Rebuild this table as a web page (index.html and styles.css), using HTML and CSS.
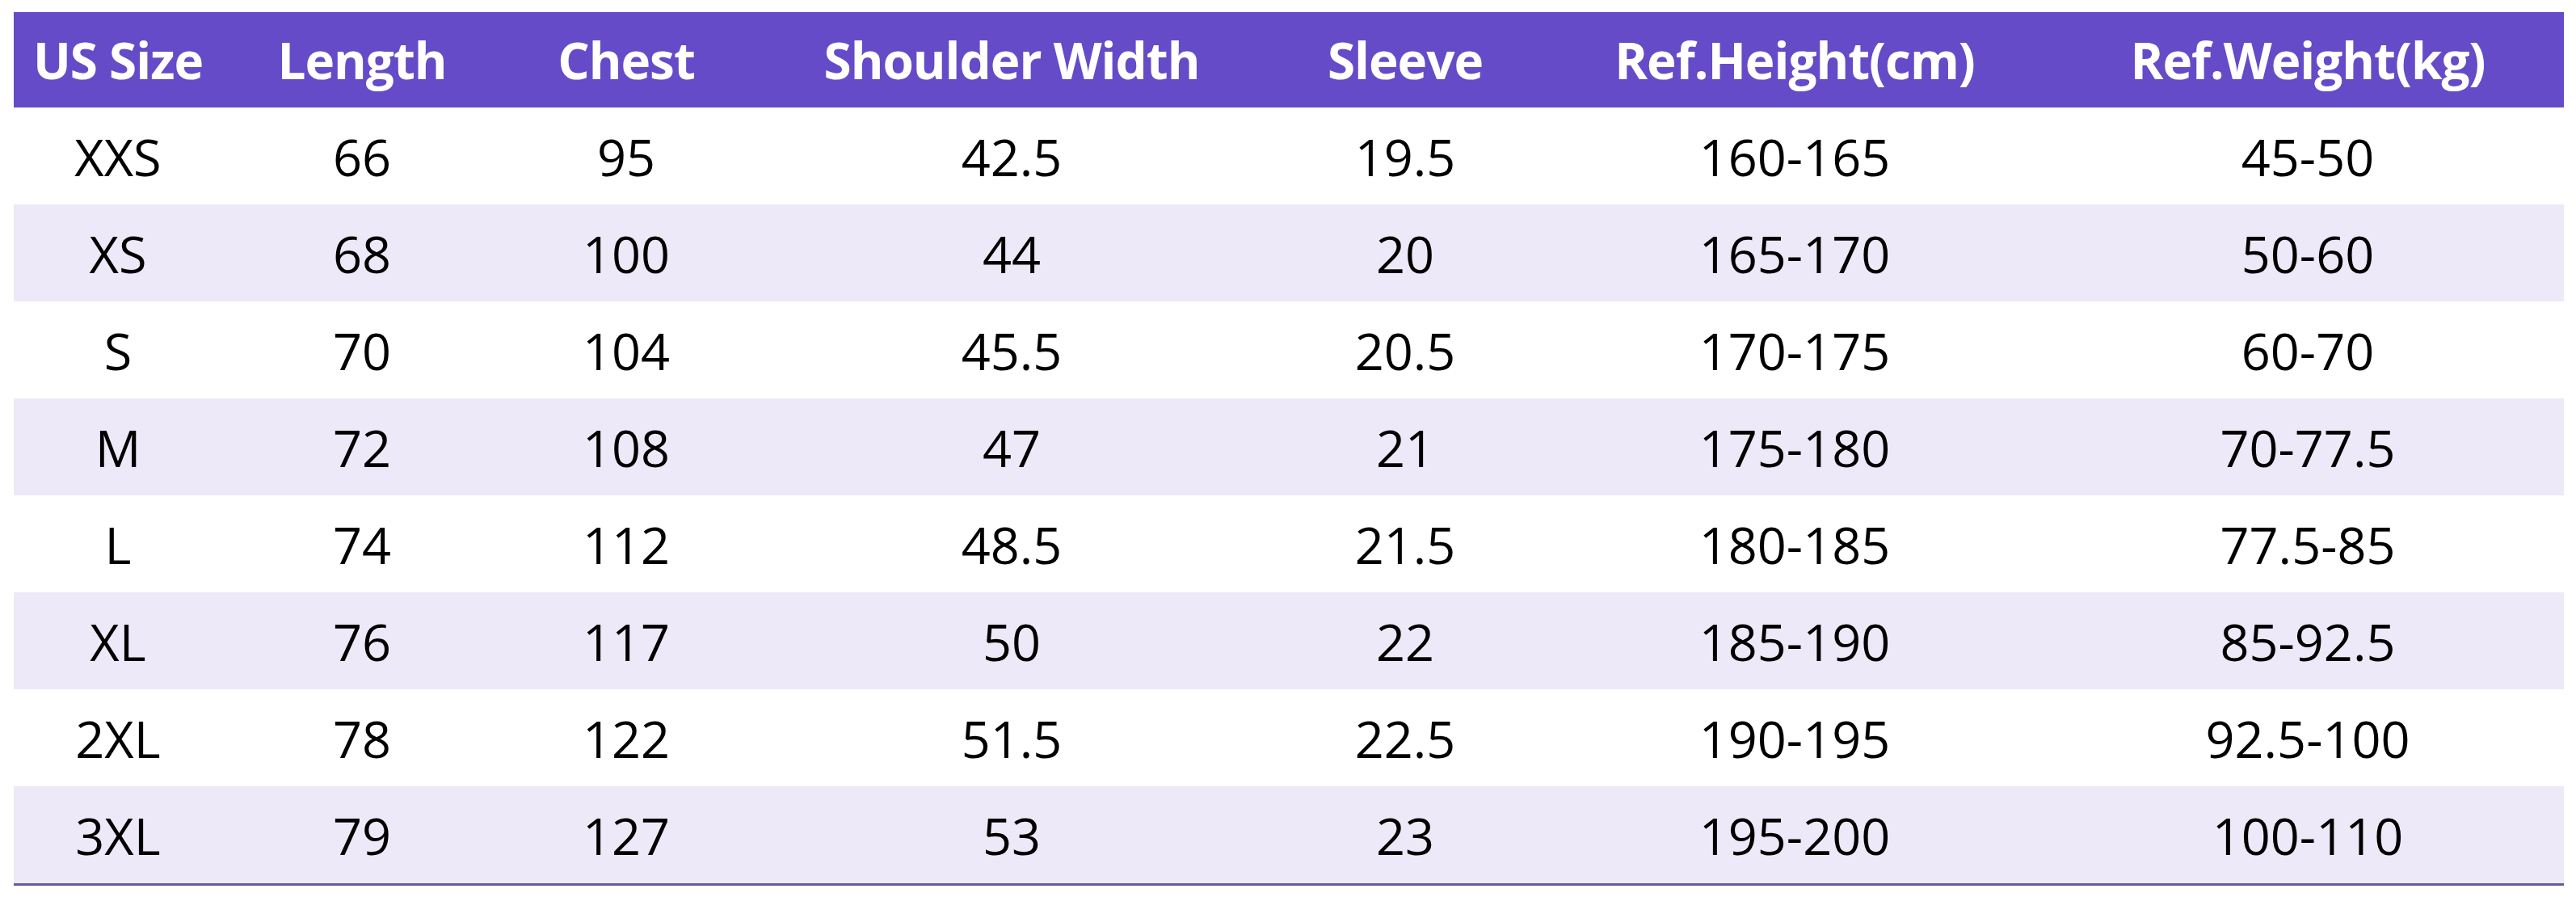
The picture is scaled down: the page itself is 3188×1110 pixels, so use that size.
FILE: index.html
```html
<!DOCTYPE html>
<html lang="en">
<head>
<meta charset="utf-8">
<title>Size Chart</title>
<link rel="stylesheet" href="styles.css">
</head>
<body>
<table class="size-table">
  <colgroup>
    <col class="c1"><col class="c2"><col class="c3"><col class="c4"><col class="c5"><col class="c6"><col class="c7">
  </colgroup>
  <thead>
    <tr>
      <th>US Size</th><th>Length</th><th>Chest</th><th>Shoulder Width</th><th>Sleeve</th><th>Ref.Height(cm)</th><th>Ref.Weight(kg)</th>
    </tr>
  </thead>
  <tbody>
    <tr><td>XXS</td><td>66</td><td>95</td><td>42.5</td><td>19.5</td><td>160-165</td><td>45-50</td></tr>
    <tr><td>XS</td><td>68</td><td>100</td><td>44</td><td>20</td><td>165-170</td><td>50-60</td></tr>
    <tr><td>S</td><td>70</td><td>104</td><td>45.5</td><td>20.5</td><td>170-175</td><td>60-70</td></tr>
    <tr><td>M</td><td>72</td><td>108</td><td>47</td><td>21</td><td>175-180</td><td>70-77.5</td></tr>
    <tr><td>L</td><td>74</td><td>112</td><td>48.5</td><td>21.5</td><td>180-185</td><td>77.5-85</td></tr>
    <tr><td>XL</td><td>76</td><td>117</td><td>50</td><td>22</td><td>185-190</td><td>85-92.5</td></tr>
    <tr><td>2XL</td><td>78</td><td>122</td><td>51.5</td><td>22.5</td><td>190-195</td><td>92.5-100</td></tr>
    <tr><td>3XL</td><td>79</td><td>127</td><td>53</td><td>23</td><td>195-200</td><td>100-110</td></tr>
  </tbody>
</table>
</body>
</html>
```

FILE: styles.css
```css
html, body {
  margin: 0;
  padding: 0;
  background: #ffffff;
}

body {
  padding: 15px 0 0 17px;
  font-family: "Open Sans", "Noto Sans", "Liberation Sans", sans-serif;
}

.size-table {
  border-collapse: separate;
  border-spacing: 0;
  table-layout: fixed;
  width: 3156px;
  border-bottom: 3px solid #675a9f;
}

.c1 { width: 258px; }
.c2 { width: 346px; }
.c3 { width: 308px; }
.c4 { width: 646px; }
.c5 { width: 328px; }
.c6 { width: 636px; }
.c7 { width: 634px; }

.size-table th {
  height: 118px;
  padding: 0;
  background: #654bc8;
  color: #ffffff;
  font-weight: 700;
  font-size: 62px;
  letter-spacing: -1px;
  text-align: center;
  vertical-align: middle;
  line-height: 1;
}

.size-table td {
  height: 120px;
  padding: 0;
  color: #000000;
  font-weight: 400;
  font-size: 63px;
  text-align: center;
  vertical-align: middle;
  line-height: 1;
}

.size-table tbody tr:nth-child(even) td {
  background: #ede9f8;
}
```
